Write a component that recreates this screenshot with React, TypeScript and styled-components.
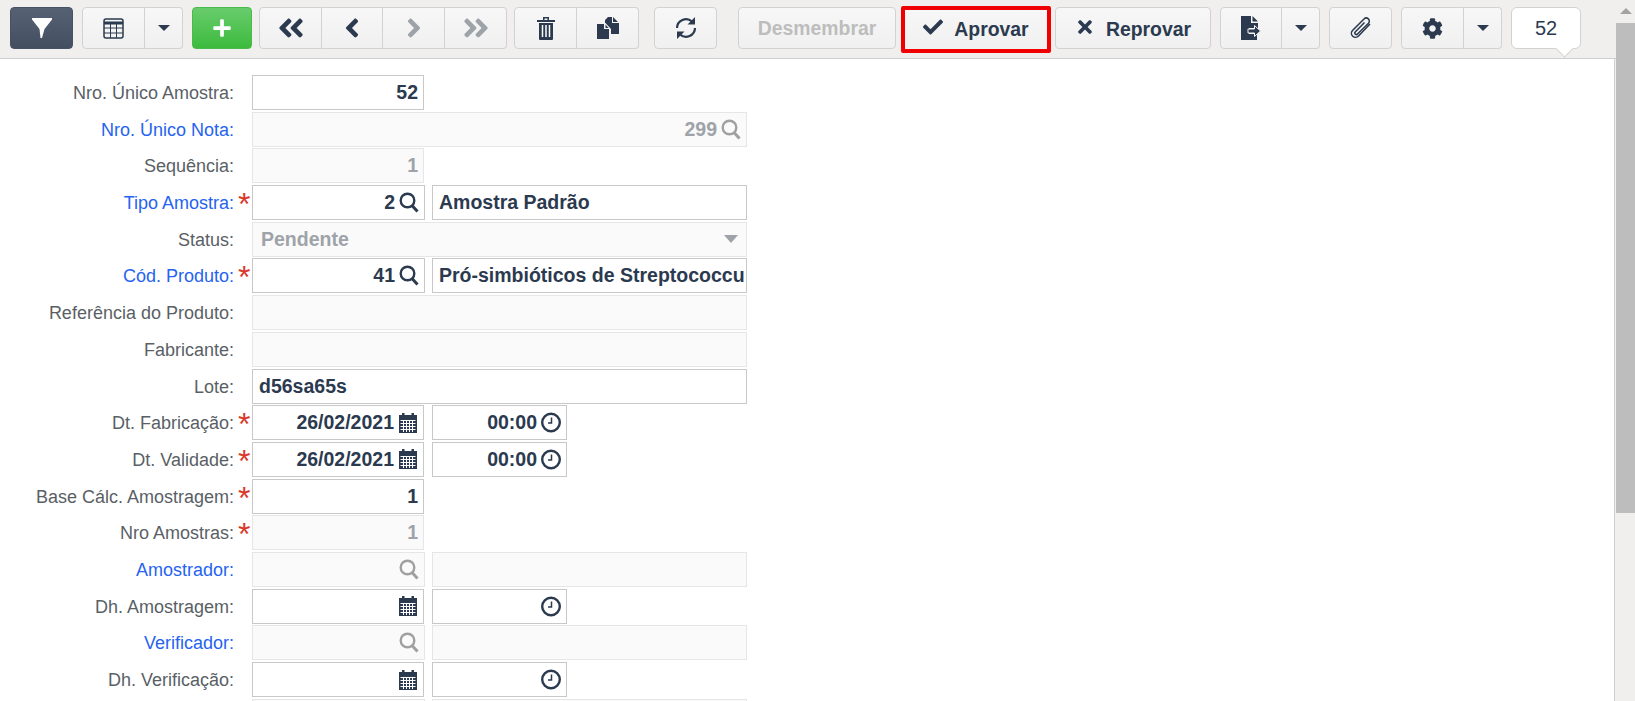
import React from "react";
import styled, { createGlobalStyle } from "styled-components";
import { FaAngleDoubleLeft, FaAngleDoubleRight, FaAngleLeft, FaAngleRight, FaCheck, FaTimes, FaCog, FaPlus } from "react-icons/fa";

const Global = createGlobalStyle`
  html, body { margin: 0; padding: 0; height: 701px; overflow: hidden; background: #f0efee; }
  * { box-sizing: border-box; }
  body { font-family: "Liberation Sans", Arial, sans-serif; }
`;

const INK = "#2b3a4f";
const MUTED = "#9ea3a9";
const SOFT = "#a0a0a0";

const Page = styled.div`
  display: flex;
  width: 1635px;
  height: 701px;
  overflow: hidden;
`;
const Main = styled.div`
  width: 1616px;
  display: flex;
  flex-direction: column;
`;
const Toolbar = styled.div`
  height: 59px;
  flex: none;
  padding: 7px 0 0 10px;
  display: flex;
  align-items: flex-start;
  background: #f0efee;
  border-bottom: 1px solid #cfcfcf;
  position: relative;
`;
const Group = styled.div<{ $ml?: number }>`
  display: flex;
  height: 42px;
  margin-left: ${(p) => p.$ml ?? 0}px;
  flex: none;
`;
const Btn = styled.div<{ $w: number; $ml?: number; $joinL?: boolean; $joinR?: boolean; $faded?: boolean }>`
  width: ${(p) => p.$w}px;
  height: 42px;
  margin-left: ${(p) => p.$ml ?? 0}px;
  flex: none;
  display: flex;
  align-items: center;
  justify-content: center;
  gap: 11px;
  background: linear-gradient(#f7f7f7, #f0f0f0);
  border: 1px solid #d2d2d2;
  border-left-width: ${(p) => (p.$joinL ? 0 : 1)}px;
  border-radius: ${(p) => (p.$joinL ? 0 : 4)}px ${(p) => (p.$joinR ? 0 : 4)}px ${(p) => (p.$joinR ? 0 : 4)}px ${(p) => (p.$joinL ? 0 : 4)}px;
  color: ${(p) => (p.$faded ? MUTED : INK)};
  font-size: 19.4px;
  font-weight: 700;
`;
const FilterBtn = styled(Btn)`
  background: linear-gradient(#566274, #434f60);
  border-color: #465262;
`;
const AddBtn = styled(Btn)`
  background: linear-gradient(#68cc6c, #3dbb3e);
  border-color: #48bb4a;
`;
const ActionBtn = styled(Btn)<{ $drop?: number }>`
  color: ${(p) => (p.$faded ? "#bdbdbd" : INK)};
  padding-top: ${(p) => p.$drop ?? 0}px;
`;
const Highlight = styled.div`
  margin-left: 5px;
  flex: none;
  height: 47px;
  margin-top: -1px;
  width: 150px;
  border: 4px solid #f00000;
  border-radius: 2px;
  display: flex;
`;
const HighlightInner = styled(ActionBtn)`
  border: none;
  border-radius: 0;
  height: 39px;
  width: 142px;
`;
const Caret = styled.span`
  width: 0;
  height: 0;
  border-left: 6px solid transparent;
  border-right: 6px solid transparent;
  border-top: 6px solid ${INK};
`;
const Balloon = styled.div`
  margin-left: 9px;
  width: 70px;
  height: 42px;
  flex: none;
  background: #fff;
  border: 1px solid #d2d2d2;
  border-radius: 6px;
  display: flex;
  align-items: center;
  justify-content: center;
  font-size: 20px;
  color: ${INK};
  position: relative;
  &::after {
    content: "";
    position: absolute;
    left: 46px;
    bottom: -7px;
    width: 12px;
    height: 12px;
    background: #fff;
    border-right: 1px solid #d2d2d2;
    border-bottom: 1px solid #d2d2d2;
    transform: rotate(45deg);
  }
`;
const Content = styled.div`
  width: 1615px;
  flex: 1;
  background: #fff;
  border-right: 1px solid #cfcfcf;
  padding-top: 16px;
  overflow: hidden;
`;
const Row = styled.div`
  display: flex;
  height: 36.7px;
  align-items: flex-start;
`;
const Label = styled.div<{ $link?: boolean }>`
  width: 234px;
  height: 34px;
  line-height: 36px;
  text-align: right;
  font-size: 18px;
  white-space: nowrap;
  color: ${(p) => (p.$link ? "#2563f0" : "#5a5f66")};
  flex: none;
`;
const Star = styled.div`
  width: 18px;
  flex: none;
  height: 34px;
  padding-left: 4px;
  font-size: 32px;
  line-height: 38px;
  color: #d9392b;
`;
const Field = styled.div<{ $w: number; $off?: boolean; $ml?: number; $text?: boolean }>`
  width: ${(p) => p.$w}px;
  margin-left: ${(p) => p.$ml ?? 0}px;
  height: 35px;
  flex: none;
  display: flex;
  align-items: center;
  gap: 4px;
  padding: 0 ${(p) => (p.$text ? 1 : 5)}px 0 6px;
  border: 1px solid ${(p) => (p.$off ? "#e6e6e6" : "#c8c8c8")};
  background: ${(p) => (p.$off ? "#fafafa" : "#fff")};
  color: ${(p) => (p.$off ? MUTED : INK)};
  font-size: 19.5px;
  font-weight: 700;
  white-space: nowrap;
`;
const Val = styled.span<{ $left?: boolean; $inset?: number }>`
  flex: 1;
  text-align: ${(p) => (p.$left ? "left" : "right")};
  padding-left: ${(p) => p.$inset ?? 0}px;
  min-width: 0;
`;
const StatusCaret = styled.span`
  width: 0;
  height: 0;
  margin-right: 3px;
  border-left: 7px solid transparent;
  border-right: 7px solid transparent;
  border-top: 8px solid #9ea3a9;
`;
const Scrollbar = styled.div`
  width: 19px;
  flex: none;
  display: flex;
  flex-direction: column;
  background: #f0efee;
`;
const ArrowBox = styled.div`
  height: 23px;
  display: flex;
  justify-content: center;
  padding-top: 8px;
`;
const ArrowUp = styled.span`
  width: 0;
  height: 0;
  border-left: 6px solid transparent;
  border-right: 6px solid transparent;
  border-bottom: 6px solid #a3a3a3;
`;
const Thumb = styled.div`
  height: 490px;
  background: #bdbdbd;
`;

const Search = ({ c = INK }: { c?: string }) => (
  <svg width="20" height="21" viewBox="0 0 20 21" fill="none" stroke={c} strokeWidth="2.400" style={{ flex: "none" }}>
    <circle cx="8.500" cy="8.500" r="6.800" />
    <path d="M13 13.500l5.500 6" strokeWidth="3" />
  </svg>
);
const Cal = () => (
  <svg width="20" height="22" viewBox="0 0 20 22" style={{ flex: "none" }}>
    <path fill={INK} d="M1 3h3V1h2.500v2h7V1H16v2h3v18H1z" />
    <path stroke="#fff" strokeWidth="1" d="M2.500 8.500h15M2.500 11.500h15M2.500 14.500h15M2.500 17.500h15M5.500 8v12M8.500 8v12M11.500 8v12M14.500 8v12" fill="none" />
  </svg>
);
const Clock = () => (
  <svg width="20" height="21" viewBox="0 0 20 21" fill="none" stroke={INK} style={{ flex: "none" }}>
    <circle cx="10" cy="10.500" r="8.800" strokeWidth="2.400" />
    <path d="M10.500 5.500V11H7" strokeWidth="1.500" />
  </svg>
);
const Funnel = () => (
  <svg width="20" height="22" viewBox="0 0 20 22"><path fill="#fff" d="M0 1h20v1.500L12.500 12 10 21H8.500L7.500 12 0 2.500z" /></svg>
);
const TableIcon = () => (
  <svg width="21" height="21" viewBox="0 0 21 21" fill="none" stroke={INK}>
    <rect x="1" y="1" width="19" height="19" rx="2" strokeWidth="1.500" />
    <path d="M1 5h19" strokeWidth="3" />
    <path d="M1 10h19M1 15h19M7.500 6v14M13.500 6v14" strokeWidth="1" />
  </svg>
);
const Trash = () => (
  <svg width="18" height="24" viewBox="0 0 18 24">
    <path fill={INK} d="M0 4h18v2H0zM6 1h6v1.500H7.500V4H6zM10.500 2H12v2h-1.500zM2 7h14v16a1 1 0 0 1-1 1H3a1 1 0 0 1-1-1z" />
    <path stroke="#fff" strokeWidth="1.500" d="M5.500 9v12M9 9v12M12.500 9v12" />
  </svg>
);
const Copy = () => (
  <svg width="22" height="22" viewBox="0 0 22 22">
    <path fill={INK} d="M0 7h7v5h5v10H0zM8.500 7.500 11.500 11h-3z" />
    <path fill={INK} d="M8 3l3-3h4v6h7v11h-8v-5L8.500 6H8zM16 0l5 5h-5z" />
  </svg>
);
const Refresh = () => (
  <svg width="22" height="24" viewBox="0 0 22 24" fill="none" stroke={INK} strokeWidth="2.200">
    <path d="M2 12a9 9 0 0 1 15-6.500" />
    <path d="M20 12a9 9 0 0 1-15 6.500" />
    <path fill={INK} stroke="none" d="M20 1v7.500h-7.500zM2 23v-7.500h7.500z" />
  </svg>
);
const FileOut = () => (
  <svg width="20" height="24" viewBox="0 0 20 24">
    <path fill={INK} d="M0 0h10v7h7v5H8v6h8v6H0zM11.500 0 17 5.500h-5.500z" />
    <path fill={INK} stroke="#f4f4f4" d="M7 13h6.500V9.500L19.500 15l-6 5.500V17H7z" />
  </svg>
);
const Clip = () => (
  <svg width="24" height="24" viewBox="0 0 24 24" fill="none" stroke={INK} strokeWidth="1.500">
    <path d="M21 8 9.500 20a4 4 0 0 1-6-5.500L15 3a3 3 0 0 1 4.500 4.200L8.500 18a1.500 1.500 0 0 1-2.300-2L15.500 6.500" />
  </svg>
);

type F = { w: number; off?: boolean; v?: string; icon?: "s" | "c" | "k"; left?: boolean; caret?: boolean };

const rows: { label: string; link?: boolean; req?: boolean; fields: F[] }[] = [
  { label: "Nro. Único Amostra:", fields: [{ w: 172, v: "52" }] },
  { label: "Nro. Único Nota:", link: true, fields: [{ w: 495, off: true, v: "299", icon: "s" }] },
  { label: "Sequência:", fields: [{ w: 172, off: true, v: "1" }] },
  { label: "Tipo Amostra:", link: true, req: true, fields: [{ w: 173, v: "2", icon: "s" }, { w: 315, v: "Amostra Padrão", left: true }] },
  { label: "Status:", fields: [{ w: 495, off: true, v: "Pendente", left: true, caret: true }] },
  { label: "Cód. Produto:", link: true, req: true, fields: [{ w: 173, v: "41", icon: "s" }, { w: 315, v: "Pró-simbióticos de Streptococcu", left: true }] },
  { label: "Referência do Produto:", fields: [{ w: 495, off: true }] },
  { label: "Fabricante:", fields: [{ w: 495, off: true }] },
  { label: "Lote:", fields: [{ w: 495, v: "d56sa65s", left: true }] },
  { label: "Dt. Fabricação:", req: true, fields: [{ w: 172, v: "26/02/2021", icon: "c" }, { w: 135, v: "00:00", icon: "k" }] },
  { label: "Dt. Validade:", req: true, fields: [{ w: 172, v: "26/02/2021", icon: "c" }, { w: 135, v: "00:00", icon: "k" }] },
  { label: "Base Cálc. Amostragem:", req: true, fields: [{ w: 172, v: "1" }] },
  { label: "Nro Amostras:", req: true, fields: [{ w: 172, off: true, v: "1" }] },
  { label: "Amostrador:", link: true, fields: [{ w: 173, off: true, icon: "s" }, { w: 315, off: true }] },
  { label: "Dh. Amostragem:", fields: [{ w: 172, icon: "c" }, { w: 135, icon: "k" }] },
  { label: "Verificador:", link: true, fields: [{ w: 173, off: true, icon: "s" }, { w: 315, off: true }] },
  { label: "Dh. Verificação:", fields: [{ w: 172, icon: "c" }, { w: 135, icon: "k" }] },
  { label: "", fields: [{ w: 173, off: true }, { w: 315, off: true }] },
];

export default function App() {
  return (
    <Page>
      <Global />
      <Main>
        <Toolbar>
          <FilterBtn $w={63}><Funnel /></FilterBtn>
          <Group $ml={9}>
            <Btn $w={63} $joinR><TableIcon /></Btn>
            <Btn $w={38} $joinL><Caret /></Btn>
          </Group>
          <AddBtn $w={60} $ml={9}><FaPlus color="#fff" size={20} /></AddBtn>
          <Group $ml={7}>
            <Btn $w={63} $joinR><FaAngleDoubleLeft size={30} color={INK} /></Btn>
            <Btn $w={61} $joinL $joinR><FaAngleLeft size={30} color={INK} /></Btn>
            <Btn $w={62} $joinL $joinR><FaAngleRight size={30} color={MUTED} /></Btn>
            <Btn $w={62} $joinL><FaAngleDoubleRight size={30} color={MUTED} /></Btn>
          </Group>
          <Group $ml={7}>
            <Btn $w={63} $joinR><Trash /></Btn>
            <Btn $w={62} $joinL><Copy /></Btn>
          </Group>
          <Btn $w={63} $ml={15}><Refresh /></Btn>
          <ActionBtn $w={158} $ml={21} $faded>Desmembrar</ActionBtn>
          <Highlight>
            <HighlightInner $w={142}><FaCheck size={20} color={INK} style={{ marginTop: -6 }} />Aprovar</HighlightInner>
          </Highlight>
          <ActionBtn $w={156} $ml={4} $drop={3}><FaTimes size={20} color={INK} style={{ marginTop: -6 }} />Reprovar</ActionBtn>
          <Group $ml={9}>
            <Btn $w={62} $joinR><FileOut /></Btn>
            <Btn $w={38} $joinL><Caret /></Btn>
          </Group>
          <Btn $w={63} $ml={9}><Clip /></Btn>
          <Group $ml={9}>
            <Btn $w={63} $joinR><FaCog size={21} color={INK} /></Btn>
            <Btn $w={38} $joinL><Caret /></Btn>
          </Group>
          <Balloon>52</Balloon>
        </Toolbar>
        <Content>
          {rows.map((r, i) => (
            <Row key={i}>
              <Label $link={r.link}>{r.label}</Label>
              <Star>{r.req ? "*" : ""}</Star>
              {r.fields.map((f, j) => (
                <Field key={j} $w={f.w} $off={f.off} $text={f.left && !f.caret} $ml={j ? (f.w === 135 ? 8 : 7) : 0}>
                  <Val $left={f.left} $inset={f.caret ? 2 : 0}>{f.v}</Val>
                  {f.caret && <StatusCaret />}
                  {f.icon === "s" && <Search c={f.off ? SOFT : INK} />}
                  {f.icon === "c" && <Cal />}
                  {f.icon === "k" && <Clock />}
                </Field>
              ))}
            </Row>
          ))}
        </Content>
      </Main>
      <Scrollbar>
        <ArrowBox><ArrowUp /></ArrowBox>
        <Thumb />
      </Scrollbar>
    </Page>
  );
}
